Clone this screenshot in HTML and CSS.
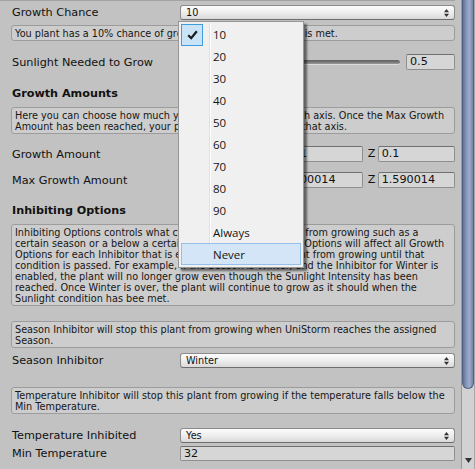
FILE: index.html
```html
<!DOCTYPE html>
<html>
<head>
<meta charset="utf-8">
<link rel="stylesheet" href="styles.css">
</head>
<body>
<div class="window">
  <main class="inspector">
    <div class="row r-chance">
      <span class="label">Growth Chance</span>
      <div class="popup"><span>10</span><svg class="arrows" width="5" height="8" viewBox="0 0 5 8"><path d="M0 3.2 L2.5 0 L5 3.2Z M0 4.8 L5 4.8 L2.5 8Z"/></svg></div>
    </div>
    <div class="helpbox hb1">You plant has a 10% chance of growing when the condition is met.</div>

    <div class="row r-sun">
      <span class="label">Sunlight Needed to Grow</span>
      <div class="slider"><div class="track"></div><div class="knob"></div></div>
      <div class="field f-slider">0.5</div>
    </div>

    <div class="header h-growth">Growth Amounts</div>
    <div class="helpbox hb2">Here you can choose how much your plant will grow on each axis. Once the Max Growth<br>Amount has been reached, your plant will stop growing on that axis.</div>

    <div class="row r-amount">
      <span class="label">Growth Amount</span>
      <div class="vec">
        <div class="vcomp"><span class="vl">X</span><div class="field">0.1</div></div>
        <div class="vcomp"><span class="vl">Y</span><div class="field">0.1</div></div>
        <div class="vcomp"><span class="vl">Z</span><div class="field">0.1</div></div>
      </div>
    </div>

    <div class="row r-max">
      <span class="label">Max Growth Amount</span>
      <div class="vec">
        <div class="vcomp"><span class="vl">X</span><div class="field">1.590014</div></div>
        <div class="vcomp"><span class="vl">Y</span><div class="field">1.00014</div></div>
        <div class="vcomp"><span class="vl">Z</span><div class="field">1.590014</div></div>
      </div>
    </div>

    <div class="header h-inhibit">Inhibiting Options</div>
    <div class="helpbox hb3">Inhibiting Options controls what conditions will stop a plant from growing such as a<br>certain season or a below a certain temperature. Inhibiting Options will affect all Growth<br>Options for each Inhibitor that is enabled, will keep the plant from growing until that<br>condition is passed. For example, if the Season is Winter, and the Inhibitor for Winter is<br>enabled, the plant will no longer grow even though the Sunlight Intensity has been<br>reached. Once Winter is over, the plant will continue to grow as it should when the<br>Sunlight condition has bee met.</div>

    <div class="helpbox hb4">Season Inhibitor will stop this plant from growing when UniStorm reaches the assigned<br>Season.</div>
    <div class="row r-season">
      <span class="label">Season Inhibitor</span>
      <div class="popup"><span>Winter</span><svg class="arrows" width="5" height="8" viewBox="0 0 5 8"><path d="M0 3.2 L2.5 0 L5 3.2Z M0 4.8 L5 4.8 L2.5 8Z"/></svg></div>
    </div>

    <div class="helpbox hb5">Temperature Inhibitor will stop this plant from growing if the temperature falls below the<br>Min Temperature.</div>
    <div class="row r-tempinh">
      <span class="label">Temperature Inhibited</span>
      <div class="popup"><span>Yes</span><svg class="arrows" width="5" height="8" viewBox="0 0 5 8"><path d="M0 3.2 L2.5 0 L5 3.2Z M0 4.8 L5 4.8 L2.5 8Z"/></svg></div>
    </div>
    <div class="row r-mintemp">
      <span class="label">Min Temperature</span>
      <div class="field f-wide">32</div>
    </div>
  </main>

  <div class="scrollbar">
    <div class="thumb"></div>
    <div class="sb-track"></div>
    <div class="sb-arrow"><svg width="7" height="5" viewBox="0 0 7 5"><path d="M0 0 L7 0 L3.5 5Z"/></svg></div>
  </div>
</div>

<div class="menu">
  <div class="item checked"><span class="checkbox"><svg width="11" height="10" viewBox="0 0 11 10"><path d="M1.2 5.2 L4.2 8.2 L9.8 1.2"/></svg></span>10</div>
  <div class="item">20</div>
  <div class="item">30</div>
  <div class="item">40</div>
  <div class="item">50</div>
  <div class="item">60</div>
  <div class="item">70</div>
  <div class="item">80</div>
  <div class="item">90</div>
  <div class="item">Always</div>
  <div class="item hover">Never</div>
</div>
</body>
</html>
```

FILE: styles.css
```css
* { box-sizing: border-box; }

body {
  margin: 0;
  width: 475px;
  height: 469px;
  overflow: hidden;
  position: relative;
  background: #c2c2c2;
  font-family: "DejaVu Sans", "Liberation Sans", sans-serif;
  color: #111;
}

.window {
  display: flex;
  height: 469px;
}

.inspector {
  width: 455px;
  padding-left: 11px;
  border-top: 1px solid #a3a3a3;
  display: flex;
  flex-direction: column;
}

.row {
  display: flex;
  align-items: center;
  flex-shrink: 0;
  width: 444px;
}

.label {
  width: 169px;
  flex-shrink: 0;
  padding-left: 1px;
  font-size: 11.25px;
  white-space: nowrap;
  color: #111;
}

.header {
  height: 16px;
  line-height: 16px;
  padding-left: 1px;
  font-weight: bold;
  font-size: 11.2px;
  color: #111;
  flex-shrink: 0;
}

.helpbox {
  width: 444px;
  flex-shrink: 0;
  border: 1px solid #9c9c9c;
  border-radius: 3px;
  background: #cdcdcd;
  padding: 2px 3px 0;
  font-size: 9.7px;
  line-height: 11px;
  color: #161616;
  white-space: nowrap;
  overflow: hidden;
}

.popup {
  flex: 1;
  height: 15px;
  display: flex;
  align-items: center;
  padding-left: 5px;
  border: 1px solid #8c8c8c;
  border-bottom-color: #6d6d6d;
  border-radius: 3px;
  background: linear-gradient(#fdfdfd, #ececec 55%, #d9d9d9);
  font-size: 9.7px;
  color: #111;
}

.arrows {
  margin-left: auto;
  margin-right: 5px;
  fill: #333;
}

.field {
  height: 16px;
  border: 1px solid #8f8f8f;
  border-top-color: #707070;
  border-radius: 2px;
  background: #d6d6d6;
  padding-left: 3px;
  font-size: 11.2px;
  line-height: 14px;
  color: #111;
  white-space: nowrap;
  overflow: hidden;
}

/* vertical rhythm */
.r-chance { margin-top: 4px; height: 15px; }
.hb1 { margin-top: 5px; height: 16px; }
.r-sun { margin-top: 13px; height: 16px; }
.h-growth { margin-top: 16px; }
.hb2 { margin-top: 5px; height: 27px; }
.r-amount { margin-top: 12px; height: 16px; }
.r-max { margin-top: 10px; height: 16px; }
.h-inhibit { margin-top: 15px; }
.hb3 { margin-top: 5px; height: 82px; }
.hb4 { margin-top: 15px; height: 27px; }
.r-season { margin-top: 5px; height: 15px; }
.hb5 { margin-top: 19px; height: 27px; }
.r-tempinh { margin-top: 14px; height: 15px; }
.r-mintemp { margin-top: 3px; height: 15px; }

/* slider */
.slider {
  flex: 1;
  height: 16px;
  position: relative;
  display: flex;
  align-items: center;
}
.slider .track {
  width: 100%;
  height: 5px;
  border-radius: 3px;
  background: linear-gradient(#5e5e5e, #7d7d7d 60%, #9a9a9a);
  border-bottom: 1px solid #dcdcdc;
}
.slider .knob {
  position: absolute;
  left: 104px;
  top: 1px;
  width: 11px;
  height: 14px;
  border-radius: 3px;
  background: linear-gradient(#fafafa, #d2d2d2);
  border: 1px solid #7a7a7a;
}
.f-slider { width: 49px; margin-left: 6px; flex-shrink: 0; }
.f-wide { flex: 1; height: 15px; line-height: 13px; }

/* vector fields */
.vec {
  flex: 1;
  display: grid;
  grid-template-columns: repeat(3, 1fr);
  column-gap: 2px;
  height: 16px;
}
.vcomp { display: flex; min-width: 0; }
.vl {
  width: 13px;
  flex-shrink: 0;
  padding-left: 3px;
  font-size: 11.2px;
  line-height: 16px;
}
.vcomp .field { flex: 1; min-width: 0; }

/* scrollbar */
.scrollbar {
  width: 14px;
  margin-left: 6px;
  height: 469px;
  display: flex;
  flex-direction: column;
  background: #d2d2d2;
  border-left: 1px solid #9a9a9a;
  border-right: 1px solid #a8a8a8;
}
.thumb {
  height: 389px;
  flex-shrink: 0;
  border: 1px solid #4f6184;
  border-top: none;
  border-radius: 0 0 6px 6px;
  background: linear-gradient(90deg, #5e7094, #8999bb 35%, #9dabca 65%, #7485a9);
}
.sb-track { flex: 1; }
.sb-arrow {
  height: 14px;
  display: flex;
  justify-content: center;
  align-items: flex-start;
  padding-top: 3px;
  fill: #333;
}

/* dropdown menu */
.menu {
  position: absolute;
  left: 178px;
  top: 21px;
  width: 126px;
  height: 247px;
  background: #f0f0f0;
  border: 1px solid #979797;
  box-shadow: 3px 3px 2px rgba(0, 0, 0, 0.5);
  padding: 1px 2px 2px 2px;
  font-family: "Segoe UI", "Open Sans", "Liberation Sans", sans-serif;
  font-size: 11.5px;
  color: #141414;
}
.menu::before {
  content: "";
  position: absolute;
  left: 30px;
  top: 1px;
  bottom: 1px;
  width: 1px;
  background: #e0e0e0;
  box-shadow: 1px 0 0 #ffffff;
}
.item {
  position: relative;
  height: 22px;
  display: flex;
  align-items: center;
  padding-left: 32px;
}
.checkbox {
  position: absolute;
  left: 0;
  top: 1px;
  width: 22px;
  height: 22px;
  background: #c9e4f6;
  border: 1px solid #3d9de0;
  display: flex;
  align-items: center;
  justify-content: center;
}
.checkbox svg {
  fill: none;
  stroke: #1a1a1a;
  stroke-width: 2.2;
}
.item.hover {
  background: #d3e5f7;
  border: 1px solid #94c0ea;
  padding-left: 31px;
}
```
